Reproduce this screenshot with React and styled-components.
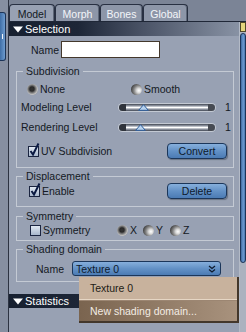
import React from "react";
import styled, { createGlobalStyle } from "styled-components";

const GlobalStyle = createGlobalStyle`
  html, body {
    margin: 0;
    padding: 0;
    background: #98a1b3;
  }
  body {
    font-family: "Liberation Sans", Arial, sans-serif;
  }
`;

const Root = styled.div`
  display: flex;
  width: 246px;
  height: 332px;
  overflow: hidden;
  background: #98a1b3;
  font-family: "Liberation Sans", Arial, sans-serif;
  font-size: 10.5px;
  color: #141923;
`;

const Rail = styled.div`
  flex: none;
  width: 8px;
  padding-top: 12px;
  background: #868fa1;
  border-right: 1px solid #2c3342;
`;

const RailTab = styled.div`
  width: 5px;
  height: 47px;
  background: linear-gradient(to right, #3f6ea6, #6c9ace);
  border: 1px solid #1c3458;
  border-left: none;
  border-radius: 0 3px 3px 0;

  &::after {
    content: "";
    display: block;
    width: 1px;
    height: 5px;
    margin: 21px 0 0 2px;
    background: #f4f6fa;
  }
`;

const Main = styled.div`
  flex: 1;
  display: flex;
  flex-direction: column;
  min-width: 0;
`;

const TabBar = styled.div`
  display: flex;
  align-items: flex-end;
  height: 21px;
  background: #7b8496;
  border-bottom: 1px solid #1f2737;
`;

const Tab = styled.div`
  box-sizing: border-box;
  width: ${(p) => p.$w}px;
  height: 17px;
  padding-top: 3px;
  line-height: 13px;
  text-align: center;
  border: 1px solid #283042;
  border-bottom: none;
  border-radius: 4px 4px 0 0;
  background: ${(p) => (p.$active ? "#98a1b3" : "#8d96a8")};
  color: ${(p) => (p.$active ? "#141923" : "#f3f5f9")};
  box-shadow: inset -1px 0 0 #5d6677;
`;

const Body = styled.div`
  flex: 1;
  display: flex;
  min-height: 0;
`;

const Panel = styled.div`
  flex: 1;
  display: flex;
  flex-direction: column;
  min-width: 0;
  border-right: 1px solid #b3bac6;
`;

const SectionHeader = styled.div`
  display: flex;
  align-items: center;
  gap: 2px;
  height: 14px;
  margin-top: ${(p) => p.$mt || 0}px;
  padding-left: 4px;
  color: #ffffff;
  font-size: 11px;
  background: linear-gradient(
    to right,
    #172030 0%,
    #1d2637 30%,
    #4a5366 58%,
    #8892a4 100%
  );
`;

const NameRow = styled.div`
  display: flex;
  align-items: center;
  gap: 2px;
  padding: 5px 0 0 22px;
`;

const TextInput = styled.input`
  box-sizing: border-box;
  width: 99px;
  height: 17px;
  margin: 0;
  padding: 0 3px;
  border: 1px solid #44382c;
  background: #ffffff;
  outline: none;
`;

const Group = styled.fieldset`
  margin: ${(p) => p.$mt}px 5px 0 7px;
  padding: 0 0 ${(p) => p.$pb}px 0;
  min-width: 0;
  border: 1px solid #c4cad4;
`;

const Legend = styled.legend`
  margin-left: 6px;
  padding: 0 3px;
  line-height: 13px;
  font-size: 10.5px;
`;

const OptionRow = styled.div`
  display: flex;
  align-items: center;
  height: ${(p) => p.$h || 14}px;
  margin-top: ${(p) => p.$mt || 0}px;
  padding-left: ${(p) => p.$pl}px;
`;

const LevelRow = styled.div`
  display: flex;
  align-items: center;
  height: 16px;
  margin-top: ${(p) => p.$mt}px;
  padding-left: 4px;
`;

const LevelLabel = styled.span`
  width: 98px;
`;

const LevelValue = styled.span`
  margin-left: 10px;
`;

const ActionRow = styled.div`
  display: flex;
  align-items: center;
  justify-content: space-between;
  height: 16px;
  margin-top: ${(p) => p.$mt || 0}px;
  padding: 0 6px 0 ${(p) => p.$pl}px;
`;

const Option = styled.label`
  display: inline-flex;
  align-items: center;
  gap: 2px;
  width: ${(p) => (p.$w ? `${p.$w}px` : "auto")};
`;

const Radio = styled.span`
  display: inline-block;
  width: 11px;
  height: 11px;
  border-radius: 50%;
  background: ${(p) =>
    p.$on
      ? "radial-gradient(circle at 45% 45%, #333 0%, #2a2a2a 25%, #7a7a7a 45%, #c0c0c0 66%, #555 96%)"
      : "radial-gradient(circle at 72% 60%, #fff 0%, #d8d8d8 22%, #828282 50%, #3a3a3a 80%, #2a2a2a 100%)"};
`;

const CheckSvg = styled.svg`
  display: block;
  overflow: visible;
  margin-top: -3px;
`;

const Track = styled.div`
  position: relative;
  width: 96px;
  height: 7px;
  border-radius: 4px;
  background: linear-gradient(
      to right,
      #30343c 0 7px,
      transparent 7px calc(100% - 7px),
      #474b53 calc(100% - 7px)
    ),
    linear-gradient(
      to bottom,
      #3e4450 0%,
      #9aa0ac 28%,
      #ffffff 50%,
      #9aa0ac 72%,
      #3e4450 100%
    );
  box-shadow: 0 0 0 1px #c3c9d3;
`;

const Thumb = styled.svg`
  position: absolute;
  bottom: 0;
  left: ${(p) => p.$pos}px;
`;

const Button = styled.button`
  width: 60px;
  height: 16px;
  padding: 0;
  border: 1px solid #1b365a;
  border-radius: 4px;
  background: linear-gradient(to bottom, #86afdc 0%, #6391c6 50%, #4b7bb4 100%);
  color: #0e1a2c;
  font-family: "Liberation Sans", Arial, sans-serif;
  font-size: 10.5px;
  box-shadow: 1px 1px 1px rgba(20, 28, 40, 0.35);
`;

const ShadingRow = styled.div`
  display: flex;
  align-items: center;
  gap: 8px;
  margin-top: 5px;
  padding-left: 19px;
`;

const SelectWrap = styled.div`
  position: relative;
  width: 149px;
  height: 15px;
`;

const SelectBox = styled.div`
  box-sizing: border-box;
  display: flex;
  align-items: center;
  justify-content: space-between;
  height: 15px;
  padding: 0 4px 0 3px;
  border: 1px solid #1b365a;
  border-radius: 3px;
  background: linear-gradient(to bottom, #86afdc 0%, #6391c6 50%, #4b7bb4 100%);
  color: #0e1a2c;
`;

const Menu = styled.div`
  position: absolute;
  z-index: 2;
  top: 16px;
  left: 7px;
  box-sizing: border-box;
  width: 160px;
  height: 46px;
  background: #c8b29d;
  border-right: 2px solid #43372b;
  border-bottom: 2px solid #43372b;
  font-size: 10.5px;
`;

const MenuItem = styled.div`
  display: flex;
  align-items: center;
  height: ${(p) => p.$h}px;
  padding-left: 11px;
  color: ${(p) => (p.$active ? "#f3ece4" : "#221c16")};
  background: ${(p) =>
    p.$active ? "linear-gradient(to right, #7a644f, #a8927d)" : "transparent"};
`;

const MenuDivider = styled.div`
  border-top: 1px solid #e6d6c4;
  border-bottom: 1px solid #9c8672;
`;

const ScrollCol = styled.div`
  flex: none;
  display: flex;
  flex-direction: column;
  width: 6px;
  background: #abb2bf;
`;

const ScrollCap = styled.div`
  box-sizing: border-box;
  height: 10px;
  background: #e4d57e;
  border: 1px solid #4e4628;
`;

const ScrollThumb = styled.div`
  box-sizing: border-box;
  height: 230px;
  margin-top: 1px;
  border: 1px solid #1c3458;
  border-radius: 3px;
  background: linear-gradient(to right, #3d6aa0, #6c9ad0 55%, #4a78b0);
`;

const Triangle = () => (
  <svg width="10" height="7" viewBox="0 0 10 7">
    <polygon points="0,0.5 10,0.5 5,6.5" fill="#ffffff" />
  </svg>
);

const Check = ({ on }) => (
  <CheckSvg width="11" height="14" viewBox="0 0 11 14">
    <defs>
      <linearGradient id="cbfill" x1="0" y1="0" x2="0" y2="1">
        <stop offset="0" stopColor="#e4ebf4" />
        <stop offset="1" stopColor="#a4b4ca" />
      </linearGradient>
    </defs>
    <rect x="0.5" y="3.5" width="10" height="10" fill="url(#cbfill)" stroke="#1a2440" />
    {on && (
      <polyline
        points="2.5,8 5,11.5 10.5,0.5"
        fill="none"
        stroke="#0b1a42"
        strokeWidth="2"
      />
    )}
  </CheckSvg>
);

const Slider = ({ pos }) => (
  <Track>
    <Thumb $pos={pos} width="11" height="7" viewBox="0 0 11 7">
      <polygon points="5.5,0.7 10.3,6.3 0.7,6.3" fill="#b8d2ee" stroke="#2b5c9a" />
    </Thumb>
  </Track>
);

const Chevrons = () => (
  <svg width="8" height="8" viewBox="0 0 8 8">
    <polyline points="1,1 4,3.5 7,1" fill="none" stroke="#0e1a2c" strokeWidth="1.2" />
    <polyline points="1,4.5 4,7 7,4.5" fill="none" stroke="#0e1a2c" strokeWidth="1.2" />
  </svg>
);

const tabs = [
  { label: "Model", w: 46 },
  { label: "Morph", w: 45 },
  { label: "Bones", w: 43 },
  { label: "Global", w: 45 },
];

export default function App() {
  return (
    <Root>
      <GlobalStyle />
      <Rail>
        <RailTab />
      </Rail>
      <Main>
        <TabBar>
          {tabs.map((t, i) => (
            <Tab key={t.label} $w={t.w} $active={i === 0}>
              {t.label}
            </Tab>
          ))}
        </TabBar>
        <Body>
          <Panel>
            <SectionHeader>
              <Triangle />
              Selection
            </SectionHeader>

            <NameRow>
              <span>Name</span>
              <TextInput readOnly value="" />
            </NameRow>

            <Group $mt={7} $pb={8}>
              <Legend>Subdivision</Legend>
              <OptionRow $mt={4} $pl={10}>
                <Option $w={104}>
                  <Radio $on />
                  None
                </Option>
                <Option>
                  <Radio />
                  Smooth
                </Option>
              </OptionRow>
              <LevelRow $mt={3}>
                <LevelLabel>Modeling Level</LevelLabel>
                <Slider pos={19} />
                <LevelValue>1</LevelValue>
              </LevelRow>
              <LevelRow $mt={4}>
                <LevelLabel>Rendering Level</LevelLabel>
                <Slider pos={16} />
                <LevelValue>1</LevelValue>
              </LevelRow>
              <ActionRow $mt={8} $pl={11}>
                <Option>
                  <Check on />
                  UV Subdivision
                </Option>
                <Button>Convert</Button>
              </ActionRow>
            </Group>

            <Group $mt={2} $pb={7}>
              <Legend>Displacement</Legend>
              <ActionRow $pl={12}>
                <Option>
                  <Check on />
                  Enable
                </Option>
                <Button>Delete</Button>
              </ActionRow>
            </Group>

            <Group $mt={3} $pb={3}>
              <Legend>Symmetry</Legend>
              <OptionRow $pl={13}>
                <Option $w={87}>
                  <Check />
                  Symmetry
                </Option>
                <Option $w={26}>
                  <Radio $on />X
                </Option>
                <Option $w={27}>
                  <Radio />Y
                </Option>
                <Option>
                  <Radio />Z
                </Option>
              </OptionRow>
            </Group>

            <Group $mt={2} $pb={5}>
              <Legend>Shading domain</Legend>
              <ShadingRow>
                <span>Name</span>
                <SelectWrap>
                  <SelectBox>
                    <span>Texture 0</span>
                    <Chevrons />
                  </SelectBox>
                  <Menu>
                    <MenuItem $h={22}>Texture 0</MenuItem>
                    <MenuDivider />
                    <MenuItem $h={20} $active>
                      New shading domain...
                    </MenuItem>
                  </Menu>
                </SelectWrap>
              </ShadingRow>
            </Group>

            <SectionHeader $mt={12}>
              <Triangle />
              Statistics
            </SectionHeader>
          </Panel>
          <ScrollCol>
            <ScrollCap />
            <ScrollThumb />
          </ScrollCol>
        </Body>
      </Main>
    </Root>
  );
}
